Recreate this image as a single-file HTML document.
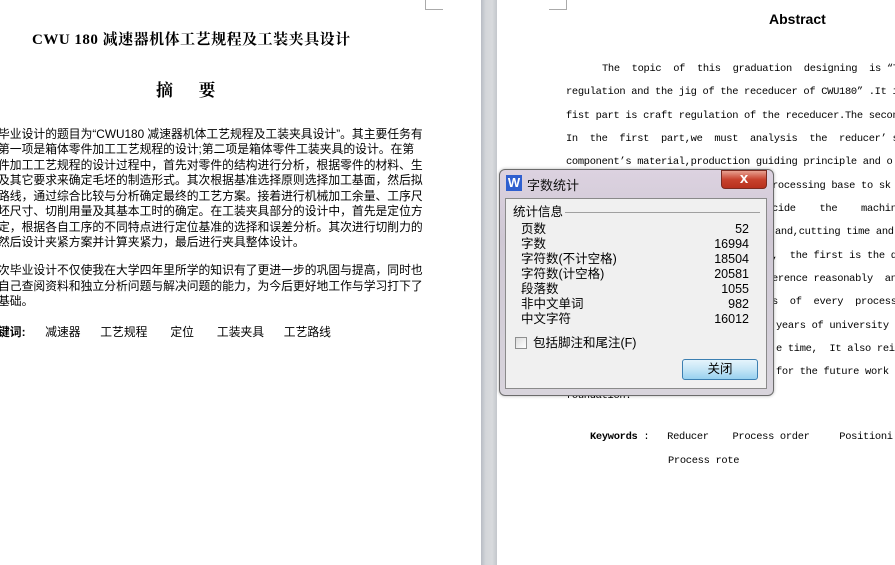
<!DOCTYPE html>
<html><head><meta charset="utf-8"><style>
*{margin:0;padding:0;box-sizing:border-box}
body{width:895px;height:565px;overflow:hidden;background:#fff;position:relative;font-family:"Liberation Sans","Noto Sans CJK SC",sans-serif}
.a{position:absolute;white-space:nowrap}
.clip{position:absolute;left:0;top:0;width:895px;height:565px;overflow:hidden}
.cn{font-family:"Liberation Serif","Noto Serif CJK SC",serif}
.lt{font-size:11.8px;color:#000;left:-2px;line-height:15px}
.en{font-family:"Liberation Mono","Noto Sans CJK SC",monospace;font-size:10.4px;color:#000;letter-spacing:-0.3px;white-space:pre}
.dl{font-size:12.5px;color:#000;line-height:15px}
</style></head><body>
<div class="clip">
<div class="a" style="left:425px;top:0;width:18px;height:10px;border-left:1px solid #aaa;border-bottom:1px solid #aaa"></div>
<div class="a cn" style="left:32px;top:28px;font-size:15px;font-weight:bold;letter-spacing:0.5px">CWU 180 减速器机体工艺规程及工装夹具设计</div>
<div class="a cn" style="left:156px;top:76px;font-size:17px;font-weight:bold">摘&nbsp;&nbsp;&nbsp;&nbsp;&nbsp;&nbsp;要</div>
<div class="a lt" style="top:127px">毕业设计的题目为“CWU180 减速器机体工艺规程及工装夹具设计”。其主要任务有</div>
<div class="a lt" style="top:142px">第一项是箱体零件加工工艺规程的设计;第二项是箱体零件工装夹具的设计。在第</div>
<div class="a lt" style="top:158px">件加工工艺规程的设计过程中，首先对零件的结构进行分析，根据零件的材料、生</div>
<div class="a lt" style="top:173px">及其它要求来确定毛坯的制造形式。其次根据基准选择原则选择加工基面，然后拟</div>
<div class="a lt" style="top:189px">路线，通过综合比较与分析确定最终的工艺方案。接着进行机械加工余量、工序尺</div>
<div class="a lt" style="top:204px">坯尺寸、切削用量及其基本工时的确定。在工装夹具部分的设计中，首先是定位方</div>
<div class="a lt" style="top:220px">定，根据各自工序的不同特点进行定位基准的选择和误差分析。其次进行切削力的</div>
<div class="a lt" style="top:235px">然后设计夹紧方案并计算夹紧力，最后进行夹具整体设计。</div>
<div class="a lt" style="top:263px">次毕业设计不仅使我在大学四年里所学的知识有了更进一步的巩固与提高，同时也</div>
<div class="a lt" style="top:279px">自己查阅资料和独立分析问题与解决问题的能力，为今后更好地工作与学习打下了</div>
<div class="a lt" style="top:294px">基础。</div>
<div class="a lt" style="top:325px"><b>键词:</b>&nbsp;&nbsp;&nbsp;&nbsp;&nbsp;&nbsp;减速器&nbsp;&nbsp;&nbsp;&nbsp;&nbsp;&nbsp;工艺规程&nbsp;&nbsp;&nbsp;&nbsp;&nbsp;&nbsp;&nbsp;定位&nbsp;&nbsp;&nbsp;&nbsp;&nbsp;&nbsp;&nbsp;工装夹具&nbsp;&nbsp;&nbsp;&nbsp;&nbsp;&nbsp;工艺路线</div>
<div class="a" style="left:481px;top:0;width:16px;height:565px;background:linear-gradient(90deg,#b8bcc4,#d4d6da 30%,#d8dadd 70%,#c4c7cc)"></div>
<div class="a" style="left:549px;top:0;width:18px;height:10px;border-right:1px solid #aaa;border-bottom:1px solid #aaa"></div>
<div class="a" style="left:769px;top:11px;font-size:14px;font-weight:bold">Abstract</div>
<div class="a en" style="left:602px;top:63px">The  topic  of  this  graduation  designing  is “The</div>
<div class="a en" style="left:566px;top:86px">regulation and the jig of the receducer of CWU180” .It i</div>
<div class="a en" style="left:566px;top:110px">fist part is craft regulation of the receducer.The second</div>
<div class="a en" style="left:566px;top:133px">In  the  first  part,we  must  analysis  the  reducer’ s  s</div>
<div class="a en" style="left:566px;top:156px">component’s material,production guiding principle and o</div>
<div class="a en" style="left:772px;top:180px">rocessing base to sk</div>
<div class="a en" style="left:772px;top:203px">cide    the    machin</div>
<div class="a en" style="left:775px;top:226px">and,cutting time and</div>
<div class="a en" style="left:772px;top:250px">,  the first is the de</div>
<div class="a en" style="left:772px;top:273px">erence reasonably  an</div>
<div class="a en" style="left:772px;top:296px">s  of  every  process.</div>
<div class="a en" style="left:776px;top:320px">years of university l</div>
<div class="a en" style="left:776px;top:343px">e time,  It also rei</div>
<div class="a en" style="left:776px;top:366px">for the future work</div>
<div class="a en" style="left:566px;top:390px">foundation.</div>
<div class="a en" style="left:590px;top:431px"><b>Keywords</b> :   Reducer    Process order     Positioni</div>
<div class="a en" style="left:668px;top:455px">Process rote</div>
<div class="a" style="left:499px;top:169px;width:275px;height:227px;border:1px solid #6b6b6b;border-radius:6px;background:linear-gradient(180deg,#dcd2e0,#cfc8d4 30%,#d8d4dc);box-shadow:0 0 3px rgba(0,0,0,.3)"></div>
<div class="a" style="left:506px;top:175px;width:16px;height:16px;background:#2f5fcf;color:#fff;font-weight:bold;font-size:13px;line-height:16px;text-align:center">W</div>
<div class="a" style="left:527px;top:175px;font-size:13px;color:#111">字数统计</div>
<div class="a" style="left:721px;top:170px;width:46px;height:19px;border:1px solid #7a2a20;border-radius:0 0 4px 4px;background:linear-gradient(180deg,#e8a090,#c8422e 50%,#b8301e);color:#fff;font-weight:bold;font-size:15px;line-height:16px;text-align:center">x</div>
<div class="a" style="left:505px;top:198px;width:262px;height:191px;background:#f0f0f0;border:1px solid #8a8a8a"></div>
<div class="a dl" style="left:513px;top:205px">统计信息</div>
<div class="a" style="left:565px;top:212px;width:195px;border-top:1px solid #a0a0a0"></div>
<div class="a dl" style="left:521px;top:222px">页数</div><div class="a dl" style="left:700px;width:49px;text-align:right;top:222px">52</div>
<div class="a dl" style="left:521px;top:237px">字数</div><div class="a dl" style="left:700px;width:49px;text-align:right;top:237px">16994</div>
<div class="a dl" style="left:521px;top:252px">字符数(不计空格)</div><div class="a dl" style="left:700px;width:49px;text-align:right;top:252px">18504</div>
<div class="a dl" style="left:521px;top:267px">字符数(计空格)</div><div class="a dl" style="left:700px;width:49px;text-align:right;top:267px">20581</div>
<div class="a dl" style="left:521px;top:282px">段落数</div><div class="a dl" style="left:700px;width:49px;text-align:right;top:282px">1055</div>
<div class="a dl" style="left:521px;top:297px">非中文单词</div><div class="a dl" style="left:700px;width:49px;text-align:right;top:297px">982</div>
<div class="a dl" style="left:521px;top:312px">中文字符</div><div class="a dl" style="left:700px;width:49px;text-align:right;top:312px">16012</div>
<div class="a" style="left:515px;top:337px;width:12px;height:12px;border:1px solid #8e8f8f;background:linear-gradient(135deg,#ddd,#fff)"></div>
<div class="a dl" style="left:533px;top:336px">包括脚注和尾注(F)</div>
<div class="a" style="left:682px;top:359px;width:76px;height:21px;border:1px solid #3c7fb1;border-radius:3px;background:linear-gradient(180deg,#e5f4fc,#c4e5f6 50%,#98d1ef);font-size:12.5px;line-height:19px;text-align:center">关闭</div>
</div>
</body></html>
